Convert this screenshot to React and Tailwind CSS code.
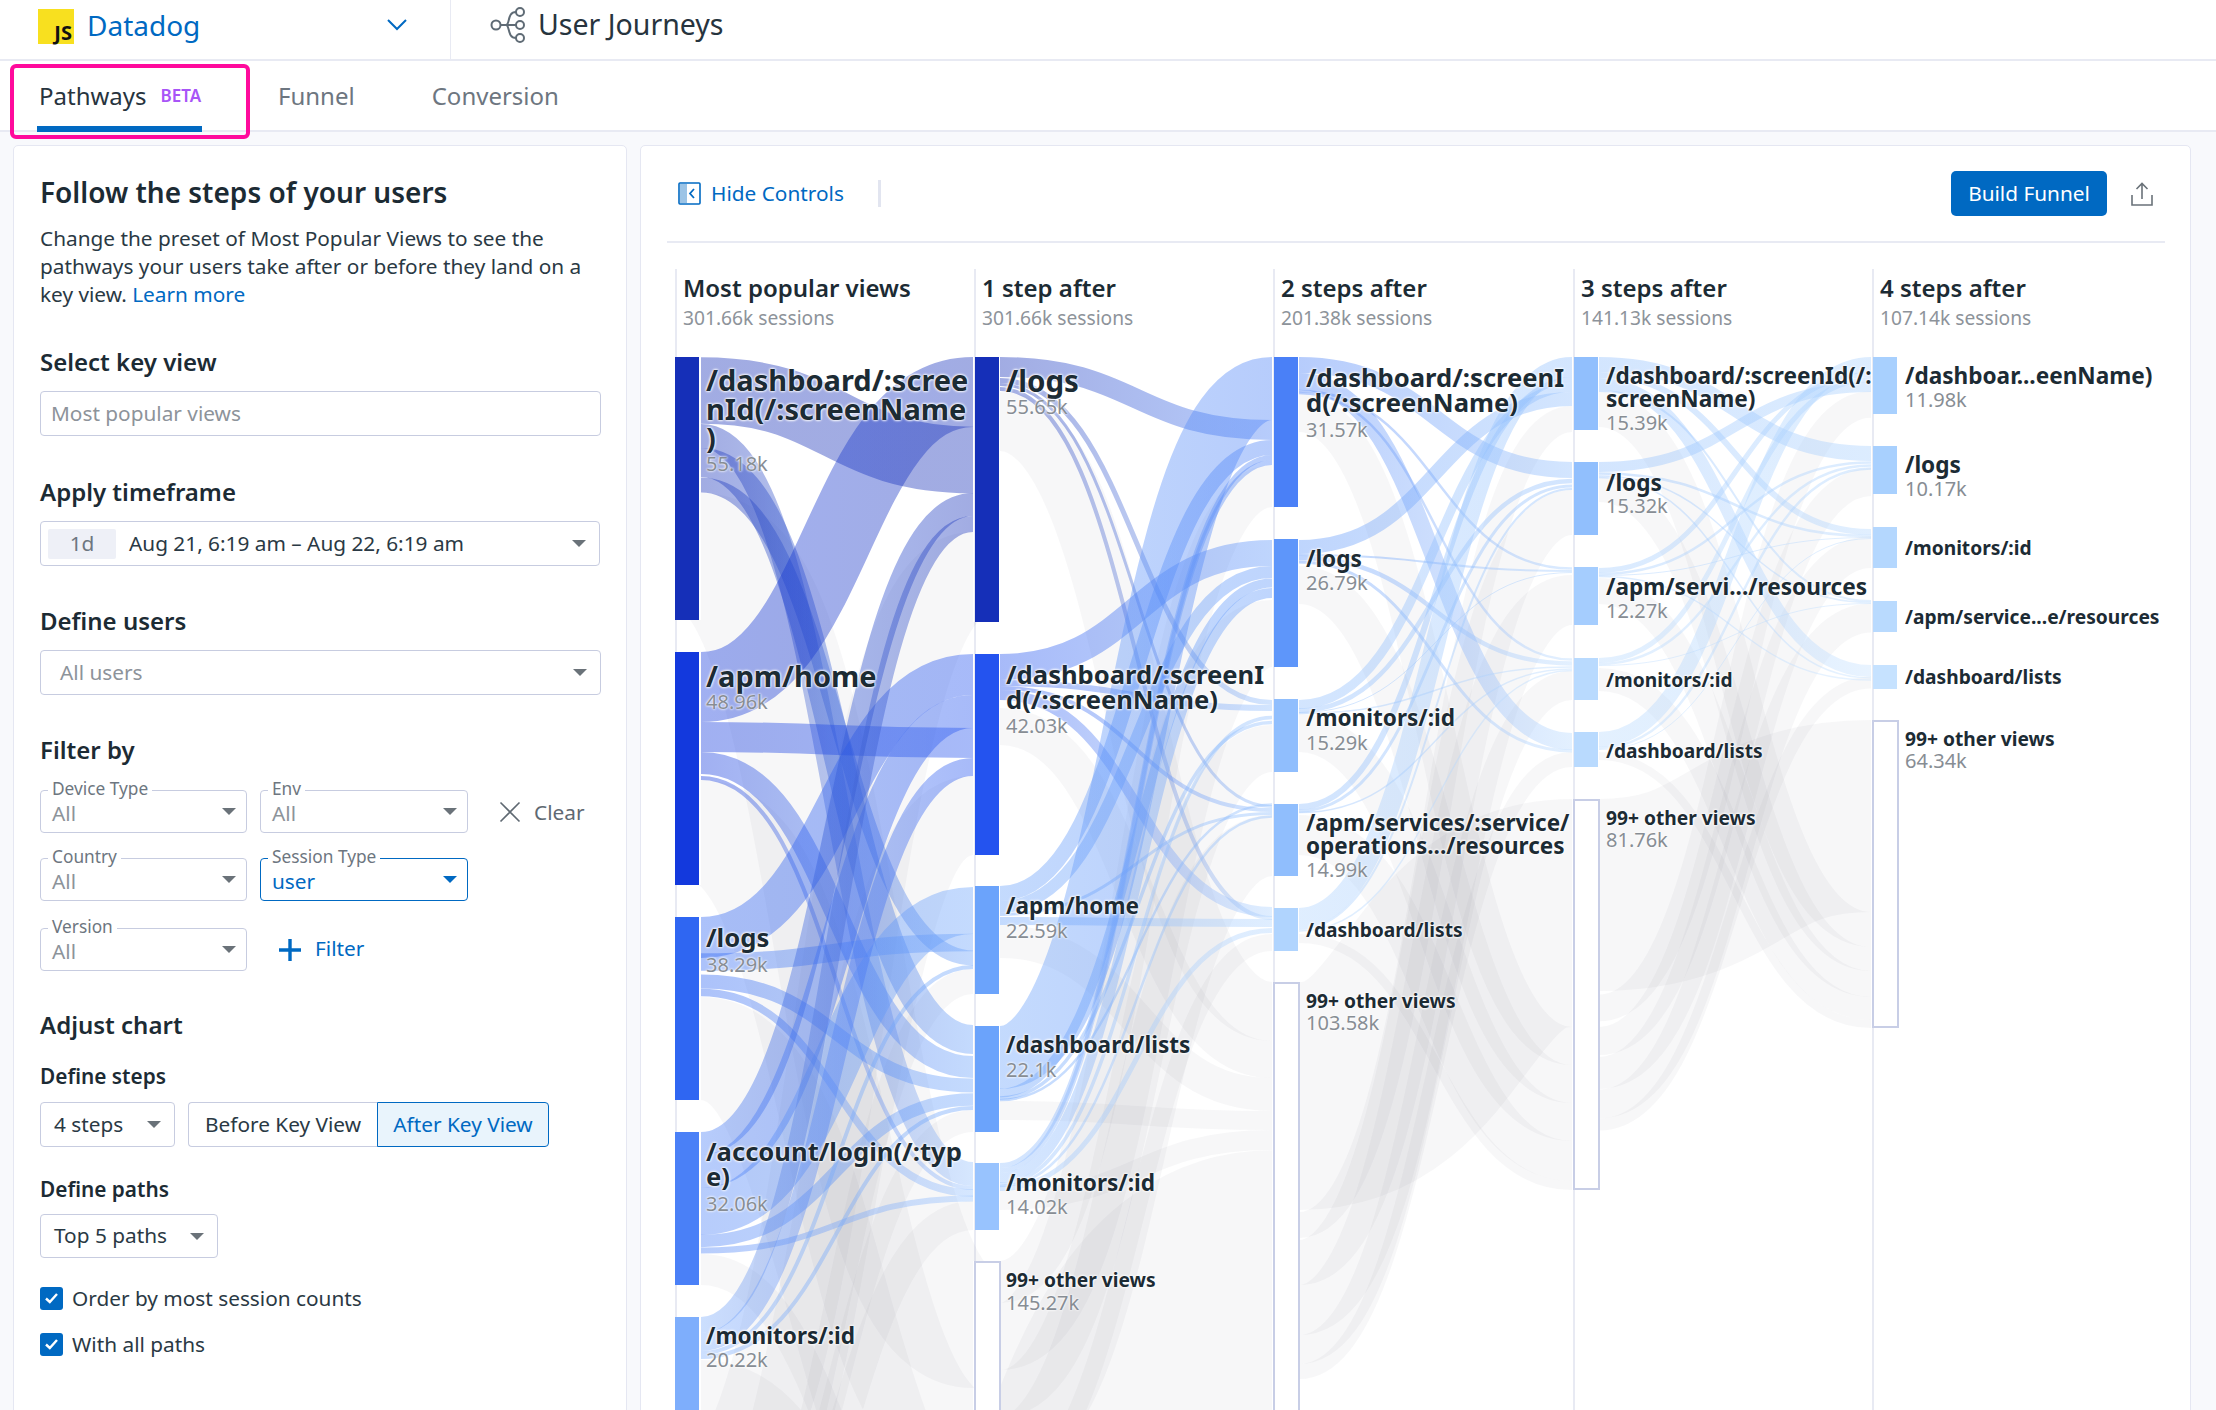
import React from 'react';

// sankey geometry, in page pixels
const CHART_X = 675;
const CHART_Y = 269;
const LINES = [675, 974, 1273, 1573, 1872];

const NODES = [
  [
    { y: 357, b: 620, c: '#152fb8' },
    { y: 652, b: 885, c: '#1339dd' },
    { y: 917, b: 1100, c: '#2f66f2' },
    { y: 1132, b: 1285, c: '#4a80f7' },
    { y: 1317, b: 1430, c: '#7eaefc' },
  ],
  [
    { y: 357, b: 622, c: '#152fb8' },
    { y: 654, b: 855, c: '#2453ef' },
    { y: 886, b: 994, c: '#6ba3fb' },
    { y: 1026, b: 1132, c: '#6ba3fb' },
    { y: 1163, b: 1230, c: '#98c3fe' },
    { y: 1261, b: 1440, other: true },
  ],
  [
    { y: 357, b: 507, c: '#4a80f7' },
    { y: 539, b: 667, c: '#5e96fa' },
    { y: 699, b: 772, c: '#90befd' },
    { y: 804, b: 876, c: '#90befd' },
    { y: 908, b: 951, c: '#b0d4fe' },
    { y: 982, b: 1440, other: true },
  ],
  [
    { y: 357, b: 430, c: '#91bffd' },
    { y: 462, b: 535, c: '#91bffd' },
    { y: 567, b: 625, c: '#a5cdfe' },
    { y: 658, b: 700, c: '#b9dafe' },
    { y: 732, b: 767, c: '#b9dafe' },
    { y: 799, b: 1190, other: true },
  ],
  [
    { y: 357, b: 414, c: '#a8d0fe' },
    { y: 446, b: 494, c: '#a8d0fe' },
    { y: 527, b: 568, c: '#b4d7fe' },
    { y: 601, b: 632, c: '#b9dafe' },
    { y: 665, b: 689, c: '#c6e2ff' },
    { y: 720, b: 1028, other: true },
  ],
];

// [source top, source bottom, target top, target bottom]
const GREY = [
  [
    [493, 620, 1261, 1388], [780, 885, 1388, 1493], [997, 1100, 1493, 1596], [1254, 1285, 1596, 1627], [1360, 1413, 1627, 1680],
    [1445, 1535, 532, 622], [1535, 1614, 776, 855], [1614, 1639, 969, 994], [1639, 1661, 1110, 1132], [1661, 1690, 1201, 1230],
    [1690, 1890, 1680, 1880],
  ],
  [
    [392, 451, 982, 1041], [708, 745, 1041, 1078], [925, 958, 1078, 1111], [1101, 1120, 1111, 1130], [1190, 1210, 1130, 1150],
    [1261, 1303, 465, 507], [1303, 1370, 600, 667], [1370, 1417, 725, 772], [1417, 1478, 815, 876], [1478, 1495, 934, 951],
    [1495, 1820, 1150, 1476],
  ],
  [
    [394, 432, 1027, 1065], [566, 604, 1065, 1103], [714, 752, 1103, 1141], [815, 855, 1141, 1181], [934, 943, 1181, 1190],
    [982, 1210, 799, 1027], [1210, 1240, 408, 430], [1240, 1285, 490, 535], [1285, 1335, 575, 625], [1335, 1364, 671, 700], [1364, 1379, 752, 767],
  ],
  [
    [392, 427, 912, 947], [478, 502, 947, 971], [578, 604, 971, 997], [668, 691, 997, 1020], [752, 760, 1020, 1028],
    [799, 991, 720, 912], [991, 1025, 395, 414], [1025, 1057, 470, 494], [1057, 1089, 536, 568], [1089, 1119, 604, 632], [1119, 1130, 676, 689],
  ],
];

const FLOWS = [
  [
    { c: '#152fb8', r: [[357, 424, 427, 493], [424, 448, 1162, 1186], [448, 477, 1025, 1054], [477, 493, 951, 965]] },
    { c: '#1339dd', r: [[652, 722, 357, 427], [722, 752, 728, 758], [752, 774, 1056, 1078], [776, 780, 1186, 1190]] },
    { c: '#2f66f2', r: [[917, 958, 654, 695], [953, 971, 934, 951], [975, 988, 1078, 1093], [988, 997, 1190, 1196]] },
    { c: '#4a80f7', r: [[1132, 1155, 493, 516], [1155, 1188, 695, 728], [1188, 1235, 887, 934], [1235, 1247, 1093, 1106], [1247, 1254, 1196, 1201]] },
    { c: '#7eaefc', r: [[1317, 1333, 516, 532], [1333, 1351, 758, 776], [1351, 1355, 965, 969], [1355, 1359, 1106, 1110]] },
  ],
  [
    { c: '#152fb8', r: [[357, 377, 420, 440], [378, 383, 700, 705], [383, 386, 805, 808], [386, 392, 917, 919]] },
    { c: '#2453ef', r: [[654, 680, 540, 566], [680, 686, 705, 711], [686, 690, 808, 812], [690, 700, 907, 917]] },
    { c: '#6ba3fb', r: [[886, 901, 440, 455], [901, 913, 566, 578], [913, 916, 812, 815], [917, 925, 919, 927]] },
    { c: '#6ba3fb', r: [[1026, 1089, 357, 420], [1089, 1097, 578, 588], [1097, 1099, 720, 725], [1099, 1101, 803, 806]] },
    { c: '#98c3fe', r: [[1163, 1168, 455, 460], [1168, 1173, 460, 465], [1173, 1183, 588, 598], [1183, 1185, 715, 720], [1185, 1187, 815, 818], [1187, 1190, 927, 934]] },
  ],
  [
    { c: '#4a80f7', r: [[357, 373, 462, 478], [373, 390, 733, 750], [390, 392, 567, 570], [392, 394, 658, 661]] },
    { c: '#5e96fa', r: [[540, 554, 392, 406], [554, 556, 570, 572], [556, 560, 661, 666], [560, 564, 750, 752]] },
    { c: '#90befd', r: [[700, 709, 383, 392], [709, 712, 478, 484], [712, 713, 572, 573], [713, 714, 666, 668]] },
    { c: '#90befd', r: [[804, 810, 377, 383], [810, 812, 484, 488], [812, 813, 668, 670]] },
    { c: '#b0d4fe', r: [[908, 928, 357, 377], [928, 930, 488, 490], [930, 932, 670, 671]] },
  ],
  [
    { c: '#91bffd', r: [[357, 372, 446, 461], [372, 378, 529, 535], [378, 390, 665, 677], [390, 392, 600, 602]] },
    { c: '#91bffd', r: [[462, 472, 382, 392], [472, 475, 535, 537], [475, 477, 602, 603], [477, 478, 677, 679]] },
    { c: '#a5cdfe', r: [[568, 573, 372, 377], [573, 575, 461, 464], [575, 576, 537, 538], [576, 577, 679, 681]] },
    { c: '#b9dafe', r: [[658, 663, 377, 382], [663, 665, 464, 467], [665, 666, 603, 604]] },
    { c: '#b9dafe', r: [[732, 747, 357, 372], [747, 749, 467, 470], [749, 750, 538, 539]] },
  ],
];

// x, first line centre, font size, line gap, lines, value, value centre
const LABELS = [
  { x: 706, y: 379, s: 29, g: 29, t: ['/dashboard/:scree', 'nId(/:screenName', ')'], v: '55.18k', vy: 464 },
  { x: 706, y: 675, s: 29, g: 29, t: ['/apm/home'], v: '48.96k', vy: 702 },
  { x: 706, y: 938, s: 25.6, g: 26, t: ['/logs'], v: '38.29k', vy: 965 },
  { x: 706, y: 1152, s: 25.6, g: 25, t: ['/account/login(/:typ', 'e)'], v: '32.06k', vy: 1204 },
  { x: 706, y: 1336, s: 22.6, g: 24, t: ['/monitors/:id'], v: '20.22k', vy: 1360 },
  { x: 1006, y: 381, s: 29.5, g: 29, t: ['/logs'], v: '55.65k', vy: 407 },
  { x: 1006, y: 675, s: 25.6, g: 25, t: ['/dashboard/:screenI', 'd(/:screenName)'], v: '42.03k', vy: 726 },
  { x: 1006, y: 906, s: 22.6, g: 24, t: ['/apm/home'], v: '22.59k', vy: 931 },
  { x: 1006, y: 1045, s: 22.6, g: 24, t: ['/dashboard/lists'], v: '22.1k', vy: 1070 },
  { x: 1006, y: 1183, s: 22.6, g: 24, t: ['/monitors/:id'], v: '14.02k', vy: 1207 },
  { x: 1006, y: 1280, s: 19.2, g: 22, t: ['99+ other views'], v: '145.27k', vy: 1303 },
  { x: 1306, y: 378, s: 25.6, g: 25, t: ['/dashboard/:screenI', 'd(/:screenName)'], v: '31.57k', vy: 430 },
  { x: 1306, y: 559, s: 22.6, g: 24, t: ['/logs'], v: '26.79k', vy: 583 },
  { x: 1306, y: 718, s: 22.6, g: 24, t: ['/monitors/:id'], v: '15.29k', vy: 743 },
  { x: 1306, y: 823, s: 22.5, g: 23, t: ['/apm/services/:service/', 'operations.../resources'], v: '14.99k', vy: 870 },
  { x: 1306, y: 930, s: 19.2, g: 22, t: ['/dashboard/lists'] },
  { x: 1306, y: 1001, s: 19.2, g: 22, t: ['99+ other views'], v: '103.58k', vy: 1023 },
  { x: 1606, y: 376, s: 22.6, g: 23, t: ['/dashboard/:screenId(/:', 'screenName)'], v: '15.39k', vy: 423 },
  { x: 1606, y: 483, s: 22.6, g: 24, t: ['/logs'], v: '15.32k', vy: 506 },
  { x: 1606, y: 587, s: 22.6, g: 24, t: ['/apm/servi.../resources'], v: '12.27k', vy: 611 },
  { x: 1606, y: 680, s: 19.2, g: 22, t: ['/monitors/:id'] },
  { x: 1606, y: 751, s: 19.2, g: 22, t: ['/dashboard/lists'] },
  { x: 1606, y: 818, s: 19.2, g: 22, t: ['99+ other views'], v: '81.76k', vy: 840 },
  { x: 1905, y: 376, s: 22.6, g: 24, t: ['/dashboar...eenName)'], v: '11.98k', vy: 400 },
  { x: 1905, y: 465, s: 22.6, g: 24, t: ['/logs'], v: '10.17k', vy: 489 },
  { x: 1905, y: 548, s: 19.2, g: 22, t: ['/monitors/:id'] },
  { x: 1905, y: 617, s: 19.2, g: 22, t: ['/apm/service...e/resources'] },
  { x: 1905, y: 677, s: 19.2, g: 22, t: ['/dashboard/lists'] },
  { x: 1905, y: 739, s: 19.2, g: 22, t: ['99+ other views'], v: '64.34k', vy: 761 },
];

const HEADERS = [
  ['Most popular views', '301.66k sessions'],
  ['1 step after', '301.66k sessions'],
  ['2 steps after', '201.38k sessions'],
  ['3 steps after', '141.13k sessions'],
  ['4 steps after', '107.14k sessions'],
];

// links are stroked centre lines, so a band keeps its thickness where it runs steep
function Link({ id, gap, r, color, opacity }) {
  const [a, b, c, d] = r;
  const x0 = LINES[gap] + 26;
  const x1 = LINES[gap + 1] - 1;
  const m = (x0 + x1) / 2;
  const y0 = (a + b) / 2;
  const y1 = (c + d) / 2;
  const target = NODES[gap + 1].find((n) => y1 >= n.y && y1 <= n.b);
  return (
    <>
      {id && (
        <linearGradient id={id} gradientUnits="userSpaceOnUse" x1={x0} y1="0" x2={x1} y2="0">
          <stop offset="0" stopColor={color} />
          <stop offset="1" stopColor={target && target.c ? target.c : color} />
        </linearGradient>
      )}
      <path
        d={`M${x0} ${y0}C${m} ${y0} ${m} ${y1} ${x1} ${y1}`}
        fill="none"
        stroke={id ? `url(#${id})` : color}
        strokeOpacity={opacity}
        strokeWidth={(b - a + d - c) / 2}
      />
    </>
  );
}

function Caret({ blue }) {
  return (
    <svg width="14" height="7" viewBox="0 0 14 7" className="shrink-0">
      <path d="M0 0h14L7 7z" fill={blue ? '#0069c2' : '#6a7279'} />
    </svg>
  );
}

function FloatSelect({ label, value, active, width = 'w-[207px]' }) {
  return (
    <div className={`relative h-[43px] ${width} rounded-[4px] border flex items-center justify-between pl-[11px] pr-[10px] ${active ? 'border-[#0069c2]' : 'border-[#c7cce0]'}`}>
      <span className="absolute left-[7px] -top-[12px] bg-white px-[4px] text-[17.300px] leading-[20px] text-[#6d7680]">{label}</span>
      <span className={`text-[20.800px] leading-[24px] pt-[3px] ${active ? 'text-[#0069c2]' : 'text-[#8d939a]'}`}>{value}</span>
      <Caret blue={active} />
    </div>
  );
}

function Check({ label, className }) {
  return (
    <div className={`flex items-center gap-[9px] ${className}`}>
      <span className="w-[23px] h-[23px] rounded-[3px] bg-[#0069c2] flex items-center justify-center">
        <svg width="15" height="12" viewBox="0 0 15 12" fill="none">
          <path d="M2 6.500 5.800 10 13 2" stroke="#fff" strokeWidth="2.400" />
        </svg>
      </span>
      <span className="text-[20.800px] leading-[24px] text-[#2a3944]">{label}</span>
    </div>
  );
}

function Sidebar() {
  return (
    <div className="w-[614px] h-[1300px] shrink-0 bg-white border border-[#e5e7f2] rounded-[5px] pl-[26px] pt-[27px]">
      <h1 className="text-[28px] leading-[38px] font-semibold text-[#1c2b34]">Follow the steps of your users</h1>
      <p className="mt-[13px] w-[565px] text-[20.800px] leading-[28px] text-[#2a3944]">
        Change the preset of Most Popular Views to see the pathways your users take after or before they land on a key view. <span className="text-[#0069c2]">Learn more</span>
      </p>
      <h2 className="mt-[39px] text-[24px] leading-[30px] font-semibold text-[#1c2b34]">Select key view</h2>
      <div className="mt-[14px] w-[561px] h-[45px] rounded-[4px] border border-[#c7cce0] flex items-center pl-[10px] text-[20.800px] text-[#8d939a]">Most popular views</div>

      <h2 className="mt-[41px] text-[24px] leading-[30px] font-semibold text-[#1c2b34]">Apply timeframe</h2>
      <div className="mt-[14px] w-[560px] h-[45px] rounded-[4px] border border-[#c7cce0] flex items-center pl-[7px] pr-[13px]">
        <span className="w-[68px] h-[30px] rounded-[2px] bg-[#eef0f7] flex items-center justify-center text-[20.800px] text-[#6d7680]">1d</span>
        <span className="ml-[13px] text-[20.800px] text-[#2a3944]">Aug 21, 6:19 am – Aug 22, 6:19 am</span>
        <span className="ml-auto"><Caret /></span>
      </div>

      <h2 className="mt-[40px] text-[24px] leading-[30px] font-semibold text-[#1c2b34]">Define users</h2>
      <div className="mt-[14px] w-[561px] h-[45px] rounded-[4px] border border-[#c7cce0] flex items-center justify-between pl-[19px] pr-[13px] text-[20.800px] text-[#8d939a]">
        All users
        <Caret />
      </div>

      <h2 className="mt-[40px] text-[24px] leading-[30px] font-semibold text-[#1c2b34]">Filter by</h2>
      <div className="mt-[25px] flex items-center gap-[13px]">
        <FloatSelect label="Device Type" value="All" />
        <FloatSelect label="Env" value="All" width="w-[208px]" />
        <svg width="22" height="22" viewBox="0 0 22 22" fill="none" className="ml-[18px]">
          <path d="M1.500 1.500l19 19M20.500 1.500l-19 19" stroke="#5f6972" strokeWidth="1.600" />
        </svg>
        <span className="text-[20.800px] text-[#5f6972] pt-[3px]">Clear</span>
      </div>
      <div className="mt-[25px] flex items-center gap-[13px]">
        <FloatSelect label="Country" value="All" />
        <FloatSelect label="Session Type" value="user" active width="w-[208px]" />
      </div>
      <div className="mt-[27px] flex items-center">
        <FloatSelect label="Version" value="All" />
        <svg width="22" height="22" viewBox="0 0 22 22" fill="none" className="ml-[32px]">
          <path d="M11 0v22M0 11h22" stroke="#0069c2" strokeWidth="3.400" />
        </svg>
        <span className="ml-[14px] text-[20.800px] text-[#0069c2] -mt-[2px]">Filter</span>
      </div>

      <h2 className="mt-[39px] text-[24px] leading-[30px] font-semibold text-[#1c2b34]">Adjust chart</h2>
      <h3 className="mt-[23px] text-[20.800px] leading-[26px] font-semibold text-[#1c2b34]">Define steps</h3>
      <div className="mt-[13px] flex items-center">
        <div className="w-[135px] h-[45px] rounded-[4px] border border-[#c7cce0] flex items-center justify-between pl-[13px] pr-[13px] text-[20.800px] text-[#2a3944]">
          4 steps
          <Caret />
        </div>
        <div className="ml-[13px] w-[189px] h-[45px] rounded-l-[4px] border border-r-0 border-[#c7cce0] flex items-center justify-center text-[20.800px] text-[#2a3944]">Before Key View</div>
        <div className="w-[172px] h-[45px] rounded-r-[4px] border border-[#0069c2] bg-[#e9f4fc] flex items-center justify-center text-[20.800px] text-[#0069c2]">After Key View</div>
      </div>
      <h3 className="mt-[29px] text-[20.800px] leading-[26px] font-semibold text-[#1c2b34]">Define paths</h3>
      <div className="mt-[12px] w-[178px] h-[44px] rounded-[4px] border border-[#c7cce0] flex items-center justify-between pl-[13px] pr-[13px] text-[20.800px] text-[#2a3944]">
        Top 5 paths
        <Caret />
      </div>
      <Check label="Order by most session counts" className="mt-[28px]" />
      <Check label="With all paths" className="mt-[22px]" />
    </div>
  );
}

function Label({ x, y, s, g, t, v, vy }) {
  return (
    <>
      {t.map((line, i) => (
        <div
          key={i}
          className="absolute whitespace-nowrap font-bold text-[#1c2b34] leading-none -translate-y-1/2 [text-shadow:0_0_2px_#fff,0_0_3px_#fff,0_0_3px_#fff]"
          style={{ left: x - CHART_X, top: y - CHART_Y + i * g, fontSize: s }}
        >
          {line}
        </div>
      ))}
      {v && (
        <div
          className="absolute whitespace-nowrap text-[20px] leading-none text-[#878d94] -translate-y-1/2 [text-shadow:0_0_2px_#fff,0_0_3px_#fff]"
          style={{ left: x - CHART_X, top: vy - CHART_Y }}
        >
          {v}
        </div>
      )}
    </>
  );
}

function Sankey() {
  return (
    <div className="relative h-[1141px] ml-[8px] mt-[26px] grid grid-cols-[299px_299px_300px_299px_1fr] overflow-hidden">
      {HEADERS.map(([title, sub]) => (
        <div key={title} className="border-l-2 border-[#e8eaf3] pl-[6px]">
          <div className="text-[24px] leading-[30px] mt-[4px] font-semibold text-[#1c2b34]">{title}</div>
          <div className="text-[19.200px] leading-[26px] mt-[2px] text-[#8d939a]">{sub}</div>
        </div>
      ))}
      <svg width="1500" height="1141" viewBox={`${CHART_X} ${CHART_Y} 1500 1141`} className="absolute left-0 top-0">
        {GREY.map((gap, i) =>
          gap.map((r, j) => <Link key={`g${i}-${j}`} gap={i} r={r} color="#888c94" opacity="0.065" />),
        )}
        {FLOWS.map((gap, i) =>
          gap.map((src, j) =>
            src.r.map((r, k) => <Link key={`f${i}-${j}-${k}`} id={`f${i}-${j}-${k}`} gap={i} r={r} color={src.c} opacity="0.4" />),
          ),
        )}
        {NODES.map((col, i) =>
          col.map((n, j) =>
            n.other ? (
              <rect key={`n${i}-${j}`} x={LINES[i] + 1} y={n.y + 1} width="25" height={n.b - n.y - 2} fill="#fff" stroke="#c8cee6" strokeWidth="2" />
            ) : (
              <rect key={`n${i}-${j}`} x={i === 0 ? LINES[i] : LINES[i] + 1} y={n.y} width="24" height={n.b - n.y} fill={n.c} />
            ),
          ),
        )}
      </svg>
      {LABELS.map((l) => (
        <Label key={`${l.x}-${l.y}`} {...l} />
      ))}
    </div>
  );
}

function ChartCard() {
  return (
    <div className="flex-1 h-[1300px] bg-white border border-[#e5e7f2] rounded-[5px] pl-[26px] pr-[25px]">
      <div className="h-[97px] border-b-2 border-[#e8eaf3] flex items-center pl-[11px]">
        <svg width="23" height="23" viewBox="0 0 23 23" fill="none">
          <rect x="1" y="1" width="21" height="21" rx="1" stroke="#0069c2" strokeWidth="1.600" />
          <path d="M2 2h7v19H2z" fill="#9cc4e6" />
          <path d="M16 7l-4 4.500 4 4.500" stroke="#0069c2" strokeWidth="1.800" />
        </svg>
        <span className="ml-[10px] text-[20.800px] text-[#0069c2]">Hide Controls</span>
        <span className="ml-[34px] w-[3px] h-[27px] bg-[#e2e5f0]" />
        <button className="ml-auto w-[156px] h-[45px] rounded-[5px] bg-[#0069c2] text-white text-[20.800px]">Build Funnel</button>
        <svg width="22" height="24" viewBox="0 0 22 24" fill="none" className="ml-[24px] mr-[12px]">
          <path d="M11 17V2M5.500 7 11 1.500 16.500 7" stroke="#6a7279" strokeWidth="1.600" />
          <path d="M1 13v10h20V13" stroke="#6a7279" strokeWidth="1.600" />
        </svg>
      </div>
      <Sankey />
    </div>
  );
}

function FlowGlyph() {
  return (
    <svg width="38" height="38" viewBox="0 0 38 38" fill="none" stroke="#5f6b75" strokeWidth="2">
      <circle cx="7" cy="19" r="4.500" />
      <circle cx="31" cy="6" r="4" />
      <circle cx="31" cy="19" r="4" />
      <circle cx="31" cy="32" r="4" />
      <path d="M12 19h15M12 19h5c4 0 1-13 10-13M17 19c4 0 1 13 10 13" />
    </svg>
  );
}

export default function App() {
  return (
    <div className="relative w-[2216px] h-[1410px] overflow-hidden bg-[#f8f9fc] font-['Noto_Sans',sans-serif]">
      <header className="h-[61px] bg-white border-b-2 border-[#e8eaf3] flex items-stretch">
        <div className="w-[451px] border-r border-[#e8eaf3] flex items-center pl-[38px] pr-[43px] pb-[10px]">
          <div className="relative w-[36px] h-[35px] mt-[4px] bg-[#f8e01f]">
            <span className="absolute right-[2px] bottom-0 text-[20px] leading-[22px] font-bold text-[#111]">JS</span>
          </div>
          <span className="ml-[13px] text-[28px] text-[#0069c2]">Datadog</span>
          <svg width="20" height="12" viewBox="0 0 20 12" fill="none" className="ml-auto">
            <path d="M1 1l9 9 9-9" stroke="#0069c2" strokeWidth="2" />
          </svg>
        </div>
        <div className="flex items-center pl-[38px] pb-[10px]">
          <FlowGlyph />
          <span className="ml-[11px] text-[28.500px] text-[#27343e]">User Journeys</span>
        </div>
      </header>
      <nav className="h-[71px] bg-white border-b-2 border-[#e8eaf3] flex items-stretch pl-[37px]">
        <div className="w-[165px] border-b-[6px] border-[#0069c2] flex items-center pl-[2px] gap-[14px] pt-[4px] h-[71px]">
          <span className="text-[24px] text-[#27343e]">Pathways</span>
          <span className="text-[17px] font-semibold text-[#a855f7]">BETA</span>
        </div>
        <div className="ml-[76px] flex items-center text-[24px] text-[#6d7680]">Funnel</div>
        <div className="ml-[77px] flex items-center text-[24px] text-[#6d7680]">Conversion</div>
      </nav>
      <main className="flex gap-[13px] pl-[13px] pr-[25px] pt-[13px]">
        <Sidebar />
        <ChartCard />
      </main>
      <div className="absolute left-[10px] top-[64px] w-[240px] h-[75px] rounded-[6px] border-[4px] border-[#ff0a9c]" />
    </div>
  );
}
